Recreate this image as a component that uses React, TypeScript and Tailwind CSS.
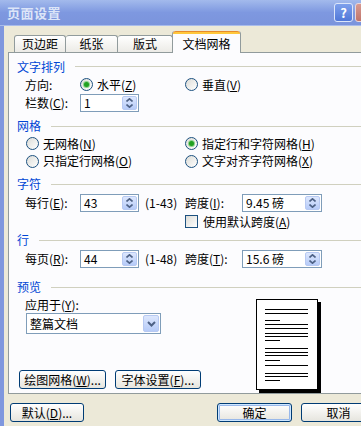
import React from "react";

const FONT = "font-['Noto_Sans_CJK_SC','Noto_Sans',sans-serif]";

function Up() {
  return (
    <svg width="7" height="4" viewBox="0 0 7 4">
      <path d="M0.5 3.5 L3.5 0.8 L6.5 3.5" stroke="#4D6185" strokeWidth="1.6" fill="none" />
    </svg>
  );
}
function Down() {
  return (
    <svg width="7" height="4" viewBox="0 0 7 4">
      <path d="M0.5 0.5 L3.5 3.2 L6.5 0.5" stroke="#4D6185" strokeWidth="1.6" fill="none" />
    </svg>
  );
}

function Spin({ value, wClass }: { value: string; wClass: string }) {
  return (
    <div className={`flex h-[18px] border border-[#7F9DB9] bg-white ${wClass}`}>
      <div className="flex-1 pl-[3px] leading-[16px] text-[12px]">{value}</div>
      <div className="my-[1px] mr-[1px] w-[15px] rounded-[2px] border border-[#B7C9F2] bg-linear-to-b from-[#DDE7FD] to-[#B6CBF8] flex flex-col items-center justify-center gap-[2px]">
        <Up />
        <Down />
      </div>
    </div>
  );
}

function Radio({ checked }: { checked?: boolean }) {
  return (
    <span className="relative inline-block w-[13px] h-[13px] shrink-0 rounded-full border border-[#1C5180] bg-linear-to-br from-[#DCDCD7] to-white">
      {checked && (
        <span className="absolute left-[3px] top-[3px] w-[5px] h-[5px] rounded-full bg-[#21A121] shadow-[0_0_0_1px_#8ED18E]" />
      )}
    </span>
  );
}

function Check() {
  return (
    <span className="inline-block w-[13px] h-[13px] shrink-0 border border-[#1C5180] bg-linear-to-br from-[#DCDCD7] to-white" />
  );
}

function Btn({ children, wClass, def }: { children: React.ReactNode; wClass: string; def?: boolean }) {
  return (
    <div
      className={`h-[19px] rounded-[3px] border border-[#003C74] bg-linear-to-b from-white to-[#E6E5DE] flex items-center justify-center text-[12px] leading-none ${wClass} ${
        def ? "shadow-[inset_0_0_0_1px_#CEE7FF,inset_0_0_0_2px_#98B8EA]" : ""
      }`}
    >
      {children}
    </div>
  );
}

function GroupLabel({ text, hClass }: { text: string; hClass: string }) {
  return (
    <div className={`flex items-center pl-[8px] ${hClass}`}>
      <span className="text-[#0046D5] text-[12px] leading-none">{text}</span>
      <div className="flex-1 h-px bg-[#D0D0BF] ml-[10px]" />
    </div>
  );
}

function PreviewPage() {
  const lines: { y: number; short?: boolean }[] = [
    { y: 9 },
    { y: 13 },
    { y: 20, short: true },
    { y: 24 },
    { y: 28 },
    { y: 33 },
    { y: 36 },
    { y: 40, short: true },
    { y: 48 },
    { y: 52 },
    { y: 55 },
    { y: 60, short: true },
    { y: 65 },
    { y: 73 },
    { y: 76 },
    { y: 80, short: true },
  ];
  return (
    <div className="relative w-[62px] h-[91px] bg-white border border-black shadow-[3px_3px_0_0_#000]">
      {lines.map((l, i) => (
        <div
          key={i}
          className="absolute left-[8px] h-px bg-black"
          style={{ top: l.y, width: l.short ? 15 : 43 }}
        />
      ))}
    </div>
  );
}

export default function App() {
  return (
    <div className={`w-[361px] h-[426px] overflow-hidden bg-[#ECE9D8] ${FONT} text-black text-[12px]`}>
      <div className="w-[380px] h-[426px] flex flex-col">
        {/* title bar */}
        <div className="h-[26px] shrink-0 flex items-center bg-linear-to-b from-[#A3BAEC] via-[#7E98E0] to-[#7B94DC] border-b border-[#A9BCEB]">
          <span className="ml-[7px] text-[13px] font-bold text-[#DCE5F8] leading-none tracking-[0.5px]">页面设置</span>
          <div className="flex-1" />
          <div className="mr-[2px] w-[19px] h-[19px] rounded-[3px] border border-[#DCE6FA] bg-linear-to-b from-[#7EA0EC] to-[#5178D8] flex items-center justify-center text-white font-bold text-[13px] leading-none">
            ?
          </div>
          <div className="w-[19px] h-[19px] mr-[6px] rounded-[3px] border border-[#E8D6DA] bg-linear-to-b from-[#D79A92] to-[#C0756C]" />
        </div>
        {/* body */}
        <div className="flex-1 flex border-l-[4px] border-[#7F97DE]">
          <div className="flex-1 flex flex-col pl-[4px]">
            {/* tabs */}
            <div className="h-[26px] shrink-0 flex items-end pl-[6px] pt-[5px]">
              <div className="w-[52px] h-[17px] border-t border-l border-r border-[#919B9C] rounded-t-[3px] bg-linear-to-b from-white to-[#ECEBE6] flex items-center justify-center leading-none">
                页边距
              </div>
              <div className="w-[52px] h-[17px] border-t border-r border-[#919B9C] rounded-t-[3px] bg-linear-to-b from-white to-[#ECEBE6] flex items-center justify-center leading-none">
                纸张
              </div>
              <div className="w-[55px] h-[17px] border-t border-r border-[#919B9C] rounded-t-[3px] bg-linear-to-b from-white to-[#ECEBE6] flex items-center justify-center leading-none">
                版式
              </div>
              <div className="relative z-10 -mb-px ml-[-1px] w-[69px] h-[22px] border-l border-r border-[#919B9C] rounded-t-[3px] bg-[#FCFCFE] flex flex-col">
                <div className="h-[3px] rounded-t-[3px] bg-[#FFC83C] border-t border-[#E68B2C]" />
                <div className="flex-1 flex items-center justify-center leading-none">文档网格</div>
              </div>
            </div>
            {/* panel */}
            <div className="w-[370px] h-[342px] shrink-0 border border-[#919B9C] bg-[#FCFCFE] flex flex-col pt-[5px]">
              <GroupLabel text="文字排列" hClass="h-[17px]" />
              <div className="h-[19px] flex items-center pl-[16px]">
                <span className="w-[55px]">方向:</span>
                <div className="w-[105px] flex items-center">
                  <Radio checked />
                  <span className="ml-[4px]">
                    水平(<u>Z</u>)
                  </span>
                </div>
                <Radio />
                <span className="ml-[4px]">
                  垂直(<u>V</u>)
                </span>
              </div>
              <div className="h-[18px] flex items-center pl-[16px]">
                <span className="w-[55px]">
                  栏数(<u>C</u>):
                </span>
                <Spin value="1" wClass="w-[59px]" />
              </div>

              <div className="mt-[5px]">
                <GroupLabel text="网格" hClass="h-[18px]" />
              </div>
              <div className="h-[17px] flex items-center pl-[17px]">
                <div className="w-[159px] flex items-center">
                  <Radio />
                  <span className="ml-[4px]">
                    无网格(<u>N</u>)
                  </span>
                </div>
                <Radio checked />
                <span className="ml-[4px]">
                  指定行和字符网格(<u>H</u>)
                </span>
              </div>
              <div className="h-[18px] flex items-center pl-[17px]">
                <div className="w-[159px] flex items-center">
                  <Radio />
                  <span className="ml-[4px]">
                    只指定行网格(<u>O</u>)
                  </span>
                </div>
                <Radio />
                <span className="ml-[4px]">
                  文字对齐字符网格(<u>X</u>)
                </span>
              </div>

              <div className="mt-[5px]">
                <GroupLabel text="字符" hClass="h-[18px]" />
              </div>
              <div className="h-[19px] flex items-center pl-[16px]">
                <span className="w-[55px]">
                  每行(<u>E</u>):
                </span>
                <Spin value="43" wClass="w-[59px]" />
                <span className="w-[46px] pl-[6px]">(1-43)</span>
                <span className="w-[57px]">
                  跨度(<u>I</u>):
                </span>
                <Spin value="9.45 磅" wClass="w-[80px]" />
              </div>
              <div className="h-[19px] flex items-center pl-[176px]">
                <Check />
                <span className="ml-[5px]">
                  使用默认跨度(<u>A</u>)
                </span>
              </div>

              <GroupLabel text="行" hClass="h-[18px]" />
              <div className="h-[19px] flex items-center pl-[16px]">
                <span className="w-[55px]">
                  每页(<u>R</u>):
                </span>
                <Spin value="44" wClass="w-[59px]" />
                <span className="w-[46px] pl-[6px]">(1-48)</span>
                <span className="w-[57px]">
                  跨度(<u>T</u>):
                </span>
                <Spin value="15.6 磅" wClass="w-[80px]" />
              </div>

              <div className="mt-[10px]">
                <GroupLabel text="预览" hClass="h-[18px]" />
              </div>
              <div className="flex">
                <div className="w-[247px] flex flex-col">
                  <div className="h-[17px] flex items-center pl-[16px]">
                    应用于(<u>Y</u>):
                  </div>
                  <div className="ml-[17px] w-[135px] h-[21px] border border-[#7F9DB9] bg-white flex">
                    <div className="flex-1 pl-[3px] leading-[19px]">整篇文档</div>
                    <div className="my-[1px] mr-[1px] w-[16px] rounded-[2px] border border-[#B7C9F2] bg-linear-to-b from-[#DDE7FD] to-[#B6CBF8] flex items-center justify-center">
                      <svg width="9" height="6" viewBox="0 0 9 6">
                        <path d="M1 1 L4.5 4.5 L8 1" stroke="#4D6185" strokeWidth="2" fill="none" />
                      </svg>
                    </div>
                  </div>
                  <div className="mt-[36px] ml-[10px] flex gap-[9px]">
                    <Btn wClass="w-[87px]">
                      绘图网格(<u>W</u>)...
                    </Btn>
                    <Btn wClass="w-[86px]">
                      字体设置(<u>F</u>)...
                    </Btn>
                  </div>
                </div>
                <div className="pt-[3px]">
                  <PreviewPage />
                </div>
              </div>
            </div>
            {/* bottom buttons */}
            <div className="mt-[9px] flex pl-[2px]">
              <Btn wClass="w-[74px]">
                默认(<u>D</u>)...
              </Btn>
              <div className="w-[133px]" />
              <Btn wClass="w-[75px]" def>
                确定
              </Btn>
              <div className="w-[9px]" />
              <Btn wClass="w-[75px]">取消</Btn>
            </div>
          </div>
        </div>
      </div>
    </div>
  );
}
